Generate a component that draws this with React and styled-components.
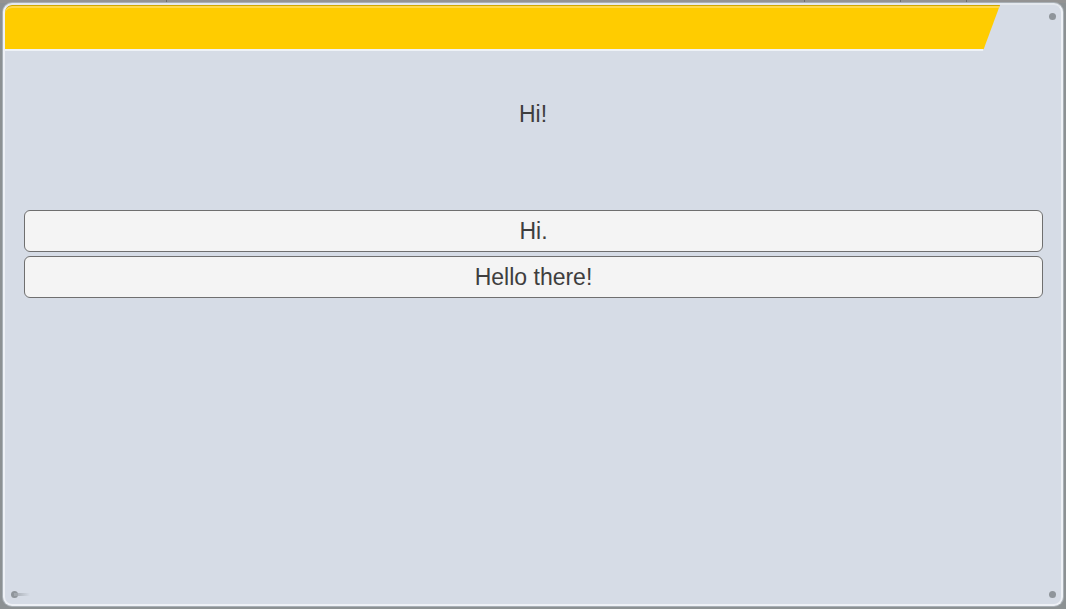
import React from "react";
import styled, { createGlobalStyle } from "styled-components";

const Global = createGlobalStyle`
  html, body { margin: 0; padding: 0; }
  body {
    background: #8c9193;
    font-family: "Liberation Sans", Arial, sans-serif;
    width: 1066px;
    height: 609px;
    overflow: hidden;
  }
`;

const Frame = styled.div`
  display: flex;
  flex-direction: column;
  width: 1066px;
  height: 609px;
  box-sizing: border-box;
`;

const TopStrip = styled.div`
  display: flex;
  height: 3px;
  background: #939393;
  flex: none;
`;

const StripSeg = styled.div`
  width: ${(p) => p.$w}px;
  flex: ${(p) => (p.$w ? "none" : "1")};
  border-right: ${(p) => (p.$last ? "none" : "1px solid #6e6e6e")};
  box-sizing: border-box;
`;

const Panel = styled.div`
  position: relative;
  flex: 1;
  margin: 0 3px 3px 3px;
  background: #d6dce6;
  border: 2px solid #eef1f6;
  border-top-color: #e4e8ee;
  border-radius: 9px;
  display: flex;
  flex-direction: column;
  overflow: hidden;
  box-shadow: 0 0 0 1px #a9b0b6;
`;

const Header = styled.div`
  flex: none;
  width: 995px;
  height: 43px;
  background: #ffcc00;
  border-top: 1px solid #cfa600;
  border-bottom: 2px solid #eef2f7;
  border-top-left-radius: 7px;
  clip-path: polygon(0 0, 100% 0, calc(100% - 17px) 100%, 0 100%);
  box-shadow: inset 0 2px 0 #ffd84a;
`;

const Title = styled.div`
  margin-top: 50px;
  text-align: center;
  font-size: 23px;
  line-height: 26px;
  color: #3e3e3e;
`;

const Choices = styled.div`
  display: flex;
  flex-direction: column;
  gap: 4px;
  margin-top: 83px;
  padding: 0 18px 0 19px;
`;

const Choice = styled.button`
  height: 42px;
  width: 100%;
  background: #f4f4f4;
  border: 1px solid #6f6f6f;
  border-radius: 6px;
  font-family: "Liberation Sans", Arial, sans-serif;
  font-size: 23px;
  color: #3e3e3e;
  padding: 0;
  cursor: pointer;
`;

const Dot = styled.div`
  position: absolute;
  width: 7px;
  height: 7px;
  border-radius: 50%;
  background: #8f959b;
  ${(p) => (p.$top ? `top: ${p.$top}px;` : "")}
  ${(p) => (p.$bottom ? `bottom: ${p.$bottom}px;` : "")}
  ${(p) => (p.$left ? `left: ${p.$left}px;` : "")}
  ${(p) => (p.$right ? `right: ${p.$right}px;` : "")}
`;

const Tail = styled.div`
  position: absolute;
  left: 9px;
  bottom: 8px;
  width: 16px;
  height: 3px;
  background: linear-gradient(to right, #a3a9b0, rgba(214, 220, 230, 0));
`;

export default function App() {
  return (
    <>
      <Global />
      <Frame>
        <TopStrip>
          <StripSeg $w={167} />
          <StripSeg $w={638} />
          <StripSeg $w={96} />
          <StripSeg $w={66} />
          <StripSeg $last />
        </TopStrip>
        <Panel>
          <Header />
          <Title>Hi!</Title>
          <Choices>
            <Choice>Hi.</Choice>
            <Choice>Hello there!</Choice>
          </Choices>
          <Dot $top={8} $right={5} />
          <Dot $bottom={6} $right={5} />
          <Dot $bottom={6} $left={6} />
          <Tail />
        </Panel>
      </Frame>
    </>
  );
}
